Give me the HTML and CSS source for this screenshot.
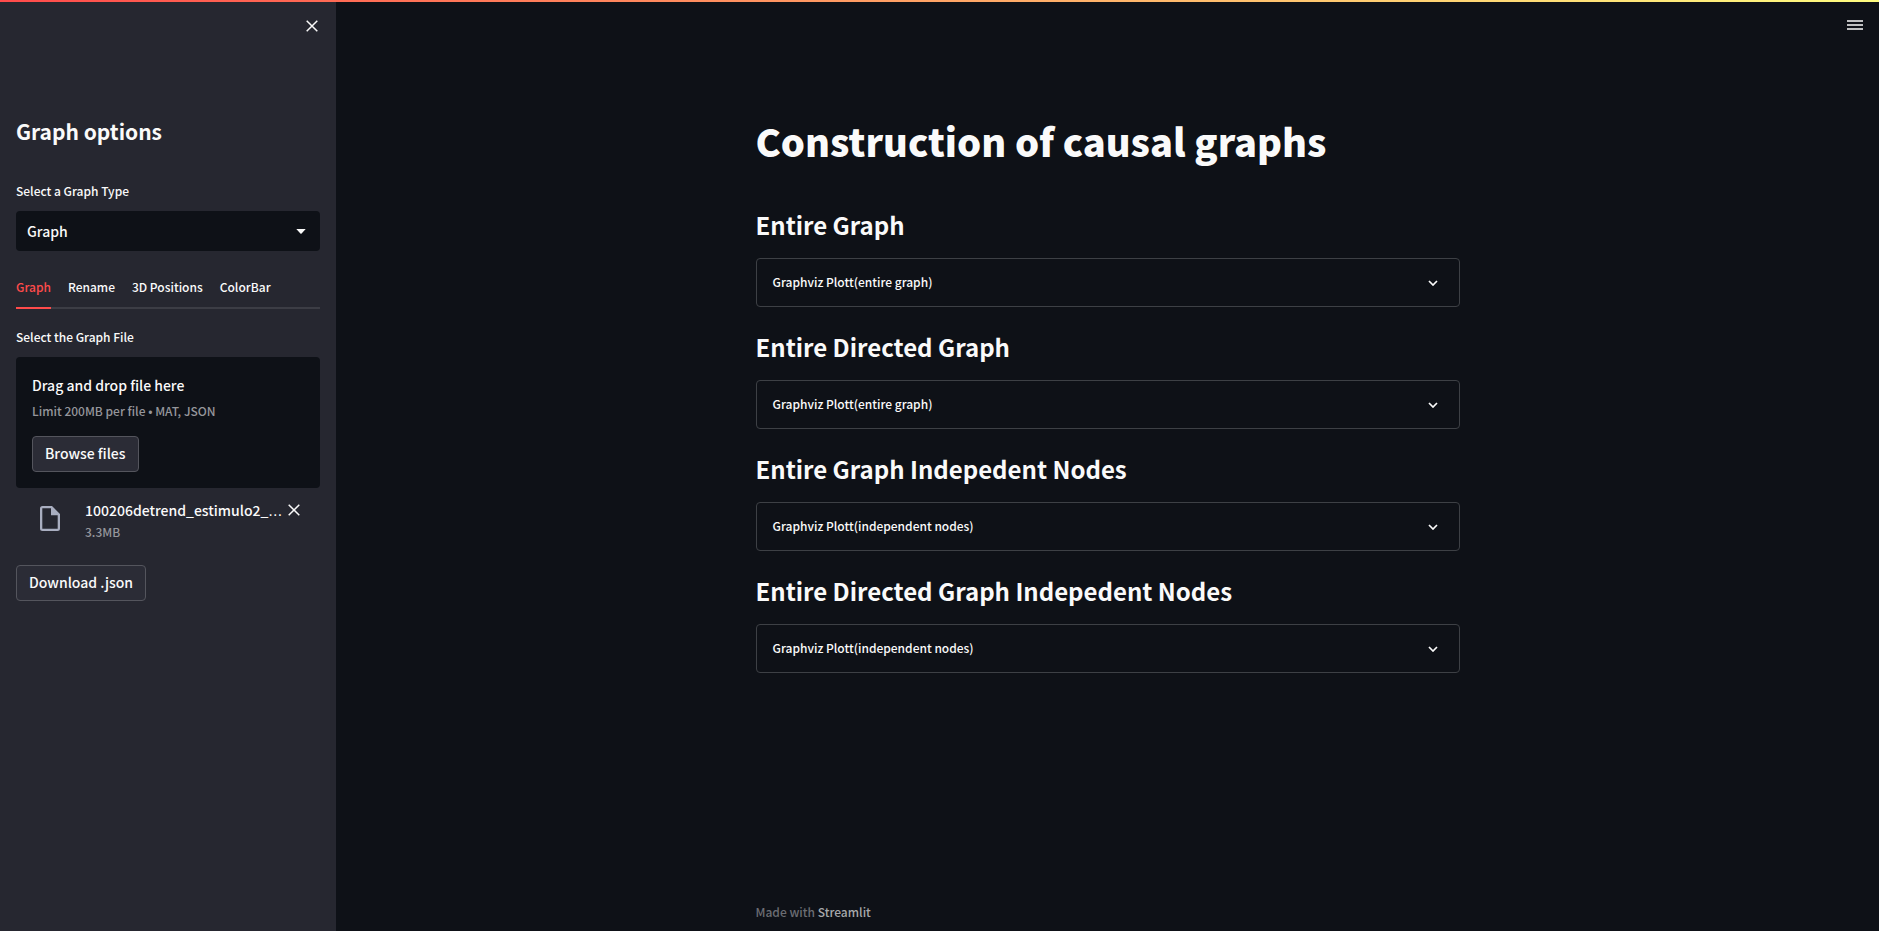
FILE: index.html
```html
<!DOCTYPE html>
<html lang="en">
<head>
<meta charset="utf-8">
<title>Construction of causal graphs</title>
<link rel="stylesheet" href="styles.css">
</head>
<body>
<div class="decoration"></div>
<div class="app">
  <aside class="sidebar">
    <div class="sidebar-top">
      <button class="icon-button" type="button" aria-label="Close sidebar">
        <svg class="icon-close" viewBox="0 0 12 12"><path d="M0.7 0.7 11.3 11.3M11.3 0.7 0.7 11.3"/></svg>
      </button>
    </div>
    <h2 class="sidebar-title">Graph options</h2>

    <label class="label" for="graph-type">Select a Graph Type</label>
    <div class="select-box">
      <select class="select" id="graph-type"><option>Graph</option></select>
      <svg class="caret" viewBox="0 0 10 5"><path d="M0.3 0h9.4L5.6 4.4a0.8 0.8 0 0 1-1.2 0z"/></svg>
    </div>

    <div class="tabs" role="tablist">
      <button class="tab tab-active" type="button" role="tab" aria-selected="true">Graph</button>
      <button class="tab" type="button" role="tab" aria-selected="false">Rename</button>
      <button class="tab" type="button" role="tab" aria-selected="false">3D Positions</button>
      <button class="tab" type="button" role="tab" aria-selected="false">ColorBar</button>
    </div>

    <label class="label" for="browse">Select the Graph File</label>
    <section class="dropzone">
      <span class="drop-title">Drag and drop file here</span>
      <span class="hint">Limit 200MB per file • MAT, JSON</span>
      <button class="button" id="browse" type="button">Browse files</button>
    </section>

    <div class="file">
      <svg class="icon-file" viewBox="0 0 20 25"><path fill-rule="evenodd" d="M2.5 0H12l8 8v14.500a2.500 2.500 0 0 1-2.500 2.500h-15A2.500 2.500 0 0 1 0 22.500v-20A2.500 2.500 0 0 1 2.500 0zM2.300 2.300v20.400h15.400V9.200H11V2.300z"/></svg>
      <div class="file-info">
        <span class="file-name">100206detrend_estimulo2_<span class="dots">…</span></span>
        <span class="hint">3.3MB</span>
      </div>
      <button class="icon-button" type="button" aria-label="Remove file">
        <svg class="icon-close" viewBox="0 0 12 12"><path d="M0.7 0.7 11.3 11.3M11.3 0.7 0.7 11.3"/></svg>
      </button>
    </div>

    <button class="button" type="button">Download .json</button>
  </aside>

  <div class="main">
    <header class="header">
      <button class="icon-button" type="button" aria-label="Main menu">
        <svg class="icon-menu" viewBox="0 0 16 10"><path d="M0 0.200h16v1.600H0zM0 4.200h16v1.600H0zM0 8.200h16v1.600H0z"/></svg>
      </button>
    </header>
    <main class="content">
      <h1 class="title">Construction of causal graphs</h1>
      <h3 class="heading">Entire Graph</h3>
      <details class="expander">
        <summary class="summary">Graphviz Plott(entire graph)<svg class="chevron" viewBox="0 0 10 6"><path d="M1 1l4 4 4-4"/></svg></summary>
      </details>
      <h3 class="heading">Entire Directed Graph</h3>
      <details class="expander">
        <summary class="summary">Graphviz Plott(entire graph)<svg class="chevron" viewBox="0 0 10 6"><path d="M1 1l4 4 4-4"/></svg></summary>
      </details>
      <h3 class="heading">Entire Graph Indepedent Nodes</h3>
      <details class="expander">
        <summary class="summary">Graphviz Plott(independent nodes)<svg class="chevron" viewBox="0 0 10 6"><path d="M1 1l4 4 4-4"/></svg></summary>
      </details>
      <h3 class="heading">Entire Directed Graph Indepedent Nodes</h3>
      <details class="expander">
        <summary class="summary">Graphviz Plott(independent nodes)<svg class="chevron" viewBox="0 0 10 6"><path d="M1 1l4 4 4-4"/></svg></summary>
      </details>
    </main>
    <footer class="footer">Made with <a class="footer-link" href="#">Streamlit</a></footer>
  </div>
</div>
</body>
</html>
```

FILE: styles.css
```css
* {
  box-sizing: border-box;
}

body {
  margin: 0;
  background: #0e1117;
  color: #fafafa;
  font-family: "Noto Sans CJK JP", "Noto Sans", sans-serif;
  font-size: 14px;
  font-weight: 500;
  line-height: 24px;
}

button,
select {
  font: inherit;
  color: inherit;
}

svg {
  display: block;
  flex: none;
}

.decoration {
  position: fixed;
  top: 0;
  left: 0;
  right: 0;
  height: 2px;
  background: linear-gradient(90deg, #ff4b4b, #fffd80);
}

.app {
  display: flex;
  min-height: 100vh;
}

/* Sidebar */

.sidebar {
  flex: none;
  width: 336px;
  padding: 16px;
  background: #262730;
}

.sidebar-top {
  display: flex;
  justify-content: flex-end;
  height: 99px;
  padding: 4px 2px;
}

.icon-button {
  display: block;
  flex: none;
  height: 12px;
  padding: 0;
  border: 0;
  background: none;
  cursor: pointer;
}

.icon-close {
  width: 12px;
  height: 12px;
  fill: none;
  stroke: #fafafa;
  stroke-width: 1.5;
}

.sidebar-title {
  margin: 0 0 33px;
  font-size: 21px;
  line-height: 32px;
  font-weight: 700;
}

.label {
  display: block;
  margin-bottom: 9px;
  font-size: 12px;
  line-height: 22px;
}

.select-box {
  display: grid;
  align-items: center;
  margin-bottom: 16px;
}

.select,
.caret {
  grid-area: 1 / 1;
}

.select {
  appearance: none;
  width: 100%;
  height: 40px;
  padding: 0 11px;
  border: 0;
  border-radius: 4px;
  background: #0e1117;
}

.caret {
  justify-self: end;
  width: 10px;
  height: 5px;
  margin-right: 14px;
  fill: #fafafa;
  pointer-events: none;
}

.tabs {
  display: flex;
  gap: 17px;
  height: 42px;
  margin-bottom: 17px;
  box-shadow: inset 0 -2px #3c3d45;
}

.tab {
  padding: 0;
  border: 0;
  border-bottom: 2px solid transparent;
  background: none;
  font-size: 12px;
  cursor: pointer;
}

.tab-active {
  border-color: #ff4b4b;
  color: #ff4b4b;
}

.dropzone {
  display: flex;
  flex-direction: column;
  align-items: flex-start;
  padding: 16px;
  border-radius: 4px;
  background: #0e1117;
}

.drop-title {
  margin-bottom: 2px;
}

.hint {
  font-size: 12px;
  color: #95969b;
}

.button {
  height: 36px;
  padding: 0 12px 2px;
  border: 1px solid #54555d;
  border-radius: 4px;
  background: #2b2c36;
  cursor: pointer;
}

.dropzone .button {
  margin-top: 13px;
}

.file {
  display: flex;
  gap: 4px;
  padding: 11px 20px 23px 24px;
}

.file-info {
  display: flex;
  flex: 1;
  flex-direction: column;
  min-width: 0;
  padding-left: 21px;
}

.file-name {
  line-height: 22px;
  white-space: nowrap;
}

.file-info .hint {
  line-height: 20px;
}

.dots {
  font-family: "DejaVu Sans", sans-serif;
}

.file .icon-button {
  margin-top: 5px;
}

.icon-file {
  width: 20px;
  height: 25px;
  margin-top: 7px;
  fill: #a9aec0;
}

/* Main area */

.main {
  display: flex;
  flex: 1;
  flex-direction: column;
  min-width: 0;
}

.header {
  display: flex;
  justify-content: flex-end;
  height: 96px;
  padding: 19px 16px;
}

.icon-menu {
  width: 16px;
  height: 10px;
  fill: #fafafa;
}

.content {
  flex: 1;
  width: 100%;
  max-width: 736px;
  margin: 0 auto;
  padding: 0 16px;
}

.title {
  margin: 0 0 16px;
  padding: 18px 0;
  font-size: 38px;
  line-height: 53px;
  font-weight: 900;
}

.heading {
  margin: 0;
  padding: 7px 0 17px;
  font-size: 24px;
  line-height: 33px;
  font-weight: 700;
}

.expander {
  margin-bottom: 16px;
  border: 1px solid #3d4045;
  border-radius: 4px;
}

.summary {
  display: flex;
  align-items: center;
  justify-content: space-between;
  height: 47px;
  padding: 0 21px 1px 16px;
  font-size: 12px;
  list-style: none;
  cursor: pointer;
}

.chevron {
  width: 10px;
  height: 6px;
  margin-top: 2px;
  fill: none;
  stroke: #fafafa;
  stroke-width: 1.7;
}

.footer {
  width: 100%;
  max-width: 736px;
  margin: 0 auto;
  padding: 0 16px 7px;
  font-size: 12px;
  color: #6b6d73;
}

.footer-link {
  color: #a6a8ab;
  text-decoration: none;
}
```
